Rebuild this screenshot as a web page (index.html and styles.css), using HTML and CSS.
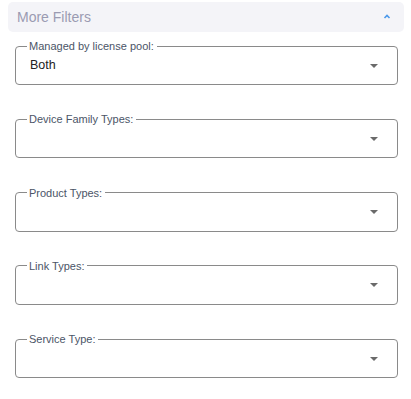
FILE: index.html
```html
<!DOCTYPE html>
<html lang="en">
<head>
<meta charset="UTF-8">
<meta name="viewport" content="width=device-width, initial-scale=1.0">
<title>More Filters</title>
<link rel="stylesheet" href="styles.css">
</head>
<body>

<div class="panel">
    <div class="panel-header">
        <span class="panel-title">More Filters</span>
        <svg class="chevron" width="8" height="5" viewBox="0 0 8 5">
            <path d="M1.5 4 L4 1.5 L6.5 4" fill="none" stroke="#4a98ea" stroke-width="1.6"/>
        </svg>
    </div>

    <div class="filters">
        <fieldset class="field">
            <legend>Managed by license pool:</legend>
            <div class="select">
                <span class="value">Both</span>
                <span class="arrow"></span>
            </div>
        </fieldset>

        <fieldset class="field">
            <legend>Device Family Types:</legend>
            <div class="select">
                <span class="value"></span>
                <span class="arrow"></span>
            </div>
        </fieldset>

        <fieldset class="field">
            <legend>Product Types:</legend>
            <div class="select">
                <span class="value"></span>
                <span class="arrow"></span>
            </div>
        </fieldset>

        <fieldset class="field">
            <legend>Link Types:</legend>
            <div class="select">
                <span class="value"></span>
                <span class="arrow"></span>
            </div>
        </fieldset>

        <fieldset class="field">
            <legend>Service Type:</legend>
            <div class="select">
                <span class="value"></span>
                <span class="arrow"></span>
            </div>
        </fieldset>
    </div>
</div>

</body>
</html>
```

FILE: styles.css
```css
body {
    margin: 0;
    background: white;
    font-family: 'Liberation Sans', Arial, sans-serif;
}

.panel {
    padding: 2px 7px 0 8px;
}

.panel-header {
    height: 30px;
    background: #f4f4f8;
    border-radius: 5px;
    display: flex;
    align-items: center;
    justify-content: space-between;
    padding: 0 13px 0 9px;
}

.panel-title {
    font-size: 14px;
    color: #9b9bb2;
}

.chevron {
    margin-top: -2px;
}

.filters {
    display: flex;
    flex-direction: column;
    gap: 28.3px;
    padding: 8px 6px 0 7px;
}

.field {
    margin: 0;
    border: 1px solid #8a8a8a;
    border-radius: 4px;
    padding: 0 11px;
    min-width: 0;
    height: 45px;
    box-sizing: border-box;
}

.field legend {
    font-size: 11px;
    color: #4b5567;
    padding: 0 3px 0 2px;
    line-height: 12px;
}

.select {
    display: flex;
    align-items: center;
    justify-content: space-between;
    height: 38px;
    margin-top: -6px;
    padding: 0 8px 0 3px;
}

.value {
    font-size: 12.5px;
    color: #222;
}

.arrow {
    width: 0;
    height: 0;
    border-left: 4.5px solid transparent;
    border-right: 4.5px solid transparent;
    border-top: 4.5px solid #6a6a6a;
    margin-top: 1px;
}
```
